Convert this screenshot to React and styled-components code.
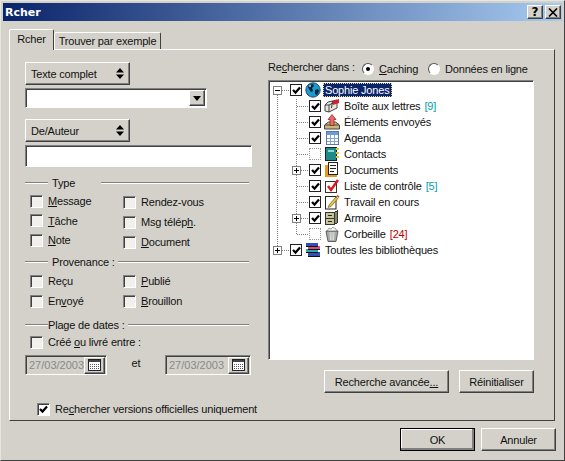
import styled, { createGlobalStyle, css } from "styled-components";

const FACE = "#d3d1ca";

const GlobalStyle = createGlobalStyle`
  html, body {
    margin: 0;
    padding: 0;
    background: ${FACE};
  }
  * {
    box-sizing: border-box;
  }
`;

const raised = css`
  background: ${FACE};
  border: 1px solid;
  border-color: #fff #404040 #404040 #fff;
  box-shadow: inset -1px -1px 0 #808080;
`;

const sunken = css`
  background: #fff;
  border: 1px solid;
  border-color: #808080 #fff #fff #808080;
  box-shadow: inset 1px 1px 0 #404040;
`;

/* ---------- icons ---------- */

const Icon = ({ children }) => (
  <svg width="16" height="16" viewBox="0 0 16 16" shapeRendering="crispEdges">
    {children}
  </svg>
);

const GlobeIcon = () => (
  <svg width="16" height="16" viewBox="0 0 16 16">
    <circle cx="8" cy="8" r="7.2" fill="#1c9ad0" stroke="#0a2a50" strokeWidth="0.8" />
    <path d="M4 3l4-1 1 2-2 2 1 3-2 1-2-3-1-2z" fill="#06233a" />
    <path d="M10 8l3-1 1 2-2 4-2-1z" fill="#06233a" />
    <circle cx="5" cy="4" r="1" fill="#8fe0f0" />
  </svg>
);

const MailIcon = () => (
  <svg width="16" height="16" viewBox="0 0 16 16">
    <path d="M1 7l3-3 9-2v8l-8 4-4-1z" fill="#e8e6e0" stroke="#333" strokeWidth="0.9" />
    <path d="M5 14V7L1 7M5 7l8-4" fill="none" stroke="#333" strokeWidth="0.9" />
    <path d="M7 10l1-7 1 0-1 7z" fill="#333" />
    <path d="M9 3l6-2v4l-6 2z" fill="#d8202c" />
  </svg>
);

const OutboxIcon = () => (
  <svg width="16" height="16" viewBox="0 0 16 16">
    <path d="M0.5 11l4-3h7l4 3v4h-15z" fill="#c8b878" stroke="#444" />
    <path d="M1 11h14" stroke="#444" />
    <path d="M8 0.5l4 5h-2v6H6v-6H4z" fill="#ea6a6a" stroke="#8a1c1c" strokeWidth="0.7" />
  </svg>
);

const AgendaIcon = () => (
  <Icon>
    <path d="M2 1.5h12.5v13H2z" fill="#fff" stroke="#5a78a8" />
    <path d="M3 2h11v3H3z" fill="#6c9cd8" />
    <path d="M3 8h11M3 11h11M6 5v9M10 5v9" stroke="#8aa4c8" />
  </Icon>
);

const ContactsIcon = () => (
  <Icon>
    <path d="M1.5 1.5h11v13h-11z" fill="#1f8a88" stroke="#123" />
    <path d="M4 4h6v2H4z" fill="#8fd8d0" />
    <path d="M12 2h3v2h-3zM12 6h3v2h-3zM12 10h3v2h-3z" fill="#e8c830" />
  </Icon>
);

const DocumentsIcon = () => (
  <Icon>
    <path d="M1 3h3v10h9v2H1z" fill="#e89820" />
    <path d="M4.5 0.5h9v12h-9z" fill="#fff" stroke="#222" />
    <path d="M6 3h6M6 6h6M6 9h4" stroke="#222" />
  </Icon>
);

const ChecklistIcon = () => (
  <svg width="16" height="16" viewBox="0 0 16 16">
    <rect x="1.5" y="3.5" width="11" height="11" fill="#fff" stroke="#333" />
    <path d="M4 8l3 4 7-10" fill="none" stroke="#d81818" strokeWidth="2.4" />
  </svg>
);

const WorkIcon = () => (
  <svg width="16" height="16" viewBox="0 0 16 16">
    <rect x="1.5" y="2.5" width="10.5" height="12.5" fill="#fff" stroke="#222" />
    <path d="M5 11l7-8 2 1.5-7 8-3 1z" fill="#e8c030" stroke="#553" strokeWidth="0.6" />
    <path d="M12.5 2l1-1 2 1.5-1 1.2z" fill="#d03030" />
  </svg>
);

const CabinetIcon = () => (
  <Icon>
    <path d="M1.5 2.5h9v12h-9z" fill="#c8c49a" stroke="#333" />
    <path d="M10.5 2.5l3-2v12l-3 2z" fill="#8e8a60" stroke="#333" />
    <path d="M1.5 8.5h9" stroke="#333" />
    <path d="M4 5h4v1H4zM4 11h4v1H4z" fill="#222" />
  </Icon>
);

const TrashIcon = () => (
  <svg width="16" height="16" viewBox="0 0 16 16">
    <path d="M2 5h12l-2 10.5H4z" fill="#a8aca8" stroke="#444" strokeWidth="0.8" />
    <path d="M6 6l.6 8M8 6v8M10 6l-.6 8" stroke="#eee" strokeWidth="0.8" />
    <path d="M3 5l2-3 2 1 2-2 3 2 1 2z" fill="#f0f0ec" stroke="#666" strokeWidth="0.6" />
  </svg>
);

const LibraryIcon = () => (
  <Icon>
    <path d="M1 1h12v3H1z" fill="#3050b8" />
    <path d="M3 4h12v3H3z" fill="#e04888" />
    <path d="M1 7h12v3H1z" fill="#28b0a8" />
    <path d="M3 10h12v4H3z" fill="#3050b8" />
    <path d="M1 4h12M3 7h12M1 10h12M3 14h12" stroke="#111" />
  </Icon>
);

const CalendarIcon = () => (
  <Icon>
    <path d="M1.5 2.5h12v11h-12z" fill="#fff" stroke="#222" />
    <path d="M2 3h11v2H2z" fill="#444" />
    <path d="M3 7h9M3 9h9M3 11h9" stroke="#556" strokeDasharray="1 1" />
  </Icon>
);

const Tick = () => (
  <svg width="9" height="9" viewBox="0 0 9 9">
    <path d="M1 4l2.5 2.6L8 1.5" fill="none" stroke="#000" strokeWidth="2.2" />
  </svg>
);

const CloseGlyph = () => (
  <svg width="10" height="9" viewBox="0 0 10 9">
    <path d="M1 0.5l8 8M9 0.5l-8 8" fill="none" stroke="#000" strokeWidth="1.6" />
  </svg>
);

const UpDownArrows = () => (
  <svg width="8" height="11" viewBox="0 0 8 11">
    <path d="M4 0L8 4.5H0zM0 6.5h8L4 11z" fill="#000" />
  </svg>
);

const DownArrow = () => (
  <svg width="8" height="5" viewBox="0 0 8 5">
    <path d="M0 0h8L4 5z" fill="#000" />
  </svg>
);

/* ---------- window chrome ---------- */

const Window = styled.div`
  width: 565px;
  height: 461px;
  padding: 2px;
  background: ${FACE};
  font-family: "Liberation Sans", Arial, sans-serif;
  font-size: 11px;
  letter-spacing: -0.18px;
  color: #111;
  white-space: nowrap;
  border: 1px solid;
  border-color: #e8e6e0 #404040 #404040 #e8e6e0;
  overflow: hidden;
`;

const TitleBar = styled.div`
  height: 18px;
  display: flex;
  align-items: center;
  padding: 0 1px 0 2px;
  background: linear-gradient(90deg, #0a246a, #a6caf0);
  color: #fff;
  font-family: "DejaVu Sans", sans-serif;
  font-size: 11px;
  font-weight: 700;
  letter-spacing: 0;
`;

const TitleText = styled.span`
  flex: 1;
`;

const TitleButton = styled.span`
  ${raised}
  width: 16px;
  height: 14px;
  margin-left: 2px;
  display: flex;
  align-items: center;
  justify-content: center;
  font-size: 12px;
  font-weight: 700;
  color: #000;
`;

const Body = styled.div`
  padding: 8px 7px 0 6px;
`;

const TabRow = styled.div`
  display: flex;
  align-items: flex-end;
  height: 20px;
`;

const Tab = styled.div`
  border: 1px solid;
  border-color: #fff #404040 transparent #fff;
  border-radius: 2px 2px 0 0;
  background: ${FACE};
  display: flex;
  align-items: center;
  justify-content: center;
  width: ${(p) => (p.$active ? "45px" : "107px")};
  height: ${(p) => (p.$active ? "21px" : "17px")};
  border-bottom-width: 0;
  ${(p) =>
    p.$active &&
    css`
      position: relative;
      z-index: 1;
      margin-bottom: -1px;
      padding-bottom: 3px;
    `}
`;

const Panel = styled.div`
  height: 372px;
  padding: 8px 0 0 15px;
  display: grid;
  grid-template-columns: 227px 266px;
  column-gap: 16px;
  align-items: start;
  border: 1px solid;
  border-color: #fff #404040 #404040 #fff;
`;

const Footer = styled.div`
  display: flex;
  justify-content: flex-end;
  gap: 6px;
  margin: 7px -1px 0 0;
`;

const PushButton = styled.div`
  ${raised}
  width: ${(p) => p.$width}px;
  height: 23px;
  display: flex;
  align-items: center;
  justify-content: center;
  ${(p) =>
    p.$default &&
    css`
      outline: 1px solid #000;
      outline-offset: -1px;
      box-shadow: inset -2px -2px 0 #808080, inset 1px 1px 0 #fff;
    `}
`;

const Mnemonic = styled.span`
  text-decoration: underline;
`;

/* ---------- left column ---------- */

const LeftColumn = styled.div`
  display: flex;
  flex-direction: column;
  padding-top: 4px;
`;

const DropButton = styled.div`
  ${raised}
  width: 105px;
  height: 23px;
  margin-top: ${(p) => p.$top || 0}px;
  padding: 0 5px 0 5px;
  display: flex;
  align-items: center;
  justify-content: space-between;
`;

const Combo = styled.div`
  ${sunken}
  width: 182px;
  height: 20px;
  margin-top: 3px;
  padding: 1px 1px 1px 0;
  display: flex;
  justify-content: flex-end;
`;

const ComboArrow = styled.div`
  ${raised}
  width: 16px;
  display: flex;
  align-items: center;
  justify-content: center;
`;

const TextInput = styled.div`
  ${sunken}
  height: 22px;
  margin-top: 3px;
`;

const SectionHeading = styled.div`
  height: 14px;
  margin-top: ${(p) => p.$top}px;
  width: 224px;
  display: flex;
  align-items: center;
`;

const Rule = styled.span`
  height: 2px;
  border-top: 1px solid #808080;
  border-bottom: 1px solid #fff;
  flex: ${(p) => (p.$grow ? 1 : "none")};
  width: ${(p) => (p.$grow ? "auto" : `${p.$width}px`)};
`;

const SectionLabel = styled.span`
  padding: ${(p) => p.$pad};
  width: ${(p) => (p.$width ? `${p.$width}px` : "auto")};
`;

const CheckGrid = styled.div`
  display: grid;
  grid-template-columns: 93px auto;
  padding-left: 5px;
  margin-top: ${(p) => p.$top}px;
`;

const CheckColumn = styled.div`
  display: flex;
  flex-direction: column;
  padding-top: ${(p) => p.$top || 0}px;
`;

const CheckRow = styled.div`
  height: ${(p) => p.$height || 20}px;
  display: flex;
  align-items: center;
  gap: 5px;
  margin-left: ${(p) => p.$left || 0}px;
  margin-top: ${(p) => p.$top || 0}px;
`;

const CheckBox = styled.span`
  ${sunken}
  background: ${(p) => (p.$on ? "#fff" : "#f1f0ec")};
  width: 13px;
  height: 13px;
  flex: none;
  display: flex;
  align-items: center;
  justify-content: center;
`;

const DateRow = styled.div`
  display: grid;
  grid-template-columns: 82px 58px 86px;
  align-items: center;
  margin-top: 3px;
`;

const DateField = styled.div`
  ${sunken}
  background: ${FACE};
  height: 20px;
  padding: 1px 1px 1px 3px;
  color: #8a8a86;
  display: flex;
  align-items: center;
`;

const DateText = styled.span`
  flex: 1;
  letter-spacing: 0;
`;

const CalendarButton = styled.span`
  ${raised}
  flex: none;
  width: 21px;
  height: 17px;
  display: flex;
  align-items: center;
  justify-content: center;
`;

const DateJoin = styled.span`
  text-align: center;
  margin-top: -4px;
`;

/* ---------- right column ---------- */

const RightColumn = styled.div`
  display: flex;
  flex-direction: column;
`;

const SourceRow = styled.div`
  height: 18px;
  display: flex;
  align-items: center;
`;

const SourceLabel = styled.span`
  width: 94px;
`;

const RadioOption = styled.span`
  display: flex;
  align-items: center;
  gap: 5px;
  width: ${(p) => p.$width}px;
  padding-top: 3px;
`;

const Radio = styled.span`
  width: 12px;
  height: 12px;
  flex: none;
  border-radius: 50%;
  border: 1px solid;
  border-color: #555 #fff #fff #555;
  background: #fff;
  display: flex;
  align-items: center;
  justify-content: center;
  &::after {
    content: "";
    width: 4px;
    height: 4px;
    border-radius: 50%;
    background: ${(p) => (p.$on ? "#000" : "transparent")};
  }
`;

const TreeBox = styled.div`
  ${sunken}
  height: 280px;
  margin-top: 4px;
  padding: 1px 0 0 2px;
`;

const TreeRow = styled.div`
  height: 16px;
  display: flex;
  align-items: center;
`;

const dots = "repeating-linear-gradient(0deg, #808080 0 1px, transparent 1px 2px)";
const dotsH = "repeating-linear-gradient(90deg, #808080 0 1px, transparent 1px 2px)";

const Gutter = styled.span`
  position: relative;
  flex: none;
  width: 19px;
  height: 16px;
  &::before {
    content: "";
    position: absolute;
    left: 6px;
    width: 1px;
    top: ${(p) => (p.$line === "down" ? "8px" : "0")};
    bottom: ${(p) => (p.$line === "up" ? "8px" : "0")};
    display: ${(p) => (p.$line ? "block" : "none")};
    background: ${dots};
  }
  &::after {
    content: "";
    position: absolute;
    left: 7px;
    right: 0;
    top: 8px;
    height: 1px;
    display: ${(p) => (p.$branch ? "block" : "none")};
    background: ${dotsH};
  }
`;

const Expander = styled.span`
  position: absolute;
  z-index: 1;
  left: 2px;
  top: 4px;
  width: 9px;
  height: 9px;
  border: 1px solid #808080;
  background: #fff;
  &::before {
    content: "";
    position: absolute;
    left: 1px;
    right: 1px;
    top: 3px;
    height: 1px;
    background: #000;
  }
  &::after {
    content: "";
    position: absolute;
    left: 3px;
    top: 1px;
    bottom: 1px;
    width: 1px;
    background: #000;
    display: ${(p) => (p.$open ? "none" : "block")};
  }
`;

const TreeCheck = styled.span`
  flex: none;
  width: 12px;
  height: 12px;
  margin-right: 3px;
  background: #fff;
  border: 1px ${(p) => (p.$on ? "solid #222" : "dotted #999")};
  display: flex;
  align-items: center;
  justify-content: center;
`;

const TreeIcon = styled.span`
  flex: none;
  width: 16px;
  height: 16px;
  display: flex;
`;

const TreeLabel = styled.span`
  margin-left: 2px;
  padding: 0 1px;
  height: 14px;
  line-height: 12px;
  border: 1px ${(p) => (p.$selected ? "dotted #e8d890" : "solid transparent")};
  background: ${(p) => (p.$selected ? "#0a246a" : "transparent")};
  color: ${(p) => (p.$selected ? "#fff" : "inherit")};
`;

const Count = styled.span`
  margin-left: 4px;
  color: ${(p) => p.$color};
`;

const ActionRow = styled.div`
  display: flex;
  justify-content: flex-end;
  gap: 10px;
  margin-top: 10px;
`;

/* ---------- data ---------- */

const folders = [
  { name: "Boîte aux lettres", icon: <MailIcon />, on: true, count: "[9]", color: "#00a0a8" },
  { name: "Éléments envoyés", icon: <OutboxIcon />, on: true },
  { name: "Agenda", icon: <AgendaIcon />, on: true },
  { name: "Contacts", icon: <ContactsIcon />, on: false },
  { name: "Documents", icon: <DocumentsIcon />, on: true, more: true },
  { name: "Liste de contrôle", icon: <ChecklistIcon />, on: true, count: "[5]", color: "#00a0a8" },
  { name: "Travail en cours", icon: <WorkIcon />, on: true },
  { name: "Armoire", icon: <CabinetIcon />, on: true, more: true },
  { name: "Corbeille", icon: <TrashIcon />, on: false, count: "[24]", color: "#c00000", last: true },
];

const Check = ({ on, children, ...rest }) => (
  <CheckRow {...rest}>
    <CheckBox $on={on}>{on && <Tick />}</CheckBox>
    <span>{children}</span>
  </CheckRow>
);

const App = () => (
  <>
    <GlobalStyle />
    <Window>
      <TitleBar>
        <TitleText>Rcher</TitleText>
        <TitleButton>?</TitleButton>
        <TitleButton>
          <CloseGlyph />
        </TitleButton>
      </TitleBar>
      <Body>
        <TabRow>
          <Tab $active>Rcher</Tab>
          <Tab>Trouver par exemple</Tab>
        </TabRow>
        <Panel>
          <LeftColumn>
            <DropButton>
              Texte complet <UpDownArrows />
            </DropButton>
            <Combo>
              <ComboArrow>
                <DownArrow />
              </ComboArrow>
            </Combo>
            <DropButton $top={11}>
              De/Auteur <UpDownArrows />
            </DropButton>
            <TextInput />

            <SectionHeading $top={9}>
              <Rule $width={23} />
              <SectionLabel $pad="0 0 0 4px" $width={53}>
                Type
              </SectionLabel>
              <Rule $grow />
            </SectionHeading>
            <CheckGrid $top={1}>
              <CheckColumn>
                <Check>
                  <Mnemonic>M</Mnemonic>essage
                </Check>
                <Check $height={19}>
                  <Mnemonic>T</Mnemonic>âche
                </Check>
                <Check>
                  <Mnemonic>N</Mnemonic>ote
                </Check>
              </CheckColumn>
              <CheckColumn $top={1}>
                <Check>Rendez-vous</Check>
                <Check>
                  Msg télép<Mnemonic>h</Mnemonic>.
                </Check>
                <Check>
                  <Mnemonic>D</Mnemonic>ocument
                </Check>
              </CheckColumn>
            </CheckGrid>

            <SectionHeading $top={3}>
              <Rule $width={23} />
              <SectionLabel $pad="0 3px 0 4px">Provenance :</SectionLabel>
              <Rule $grow />
            </SectionHeading>
            <CheckGrid $top={2}>
              <CheckColumn>
                <Check>Reçu</Check>
                <Check>
                  En<Mnemonic>v</Mnemonic>oyé
                </Check>
              </CheckColumn>
              <CheckColumn>
                <Check>
                  <Mnemonic>P</Mnemonic>ublié
                </Check>
                <Check>
                  <Mnemonic>B</Mnemonic>rouillon
                </Check>
              </CheckColumn>
            </CheckGrid>

            <SectionHeading $top={7}>
              <Rule $width={23} />
              <SectionLabel $pad="0 3px 0 0">Plage de dates :</SectionLabel>
              <Rule $grow />
            </SectionHeading>
            <Check $left={5}>
              Créé <Mnemonic>o</Mnemonic>u livré entre :
            </Check>
            <DateRow>
              <DateField>
                <DateText>27/03/2003</DateText>
                <CalendarButton>
                  <CalendarIcon />
                </CalendarButton>
              </DateField>
              <DateJoin>et</DateJoin>
              <DateField>
                <DateText>27/03/2003</DateText>
                <CalendarButton>
                  <CalendarIcon />
                </CalendarButton>
              </DateField>
            </DateRow>
            <Check $left={12} $top={24} on>
              Re<Mnemonic>c</Mnemonic>hercher versions officielles uniquement
            </Check>
          </LeftColumn>

          <RightColumn>
            <SourceRow>
              <SourceLabel>
                Re<Mnemonic>c</Mnemonic>hercher dans :
              </SourceLabel>
              <RadioOption $width={66}>
                <Radio $on />
                <span>
                  <Mnemonic>C</Mnemonic>aching
                </span>
              </RadioOption>
              <RadioOption>
                <Radio />
                <span>Données en ligne</span>
              </RadioOption>
            </SourceRow>
            <TreeBox>
              <TreeRow>
                <Gutter $line="down" $branch>
                  <Expander $open />
                </Gutter>
                <TreeCheck $on>
                  <Tick />
                </TreeCheck>
                <TreeIcon>
                  <GlobeIcon />
                </TreeIcon>
                <TreeLabel $selected>Sophie Jones</TreeLabel>
              </TreeRow>
              {folders.map((f) => (
                <TreeRow key={f.name}>
                  <Gutter $line="full" />
                  <Gutter $line={f.last ? "up" : "full"} $branch>
                    {f.more && <Expander />}
                  </Gutter>
                  <TreeCheck $on={f.on}>{f.on && <Tick />}</TreeCheck>
                  <TreeIcon>{f.icon}</TreeIcon>
                  <TreeLabel>
                    {f.name}
                    {f.count && <Count $color={f.color}>{f.count}</Count>}
                  </TreeLabel>
                </TreeRow>
              ))}
              <TreeRow>
                <Gutter $line="up" $branch>
                  <Expander />
                </Gutter>
                <TreeCheck $on>
                  <Tick />
                </TreeCheck>
                <TreeIcon>
                  <LibraryIcon />
                </TreeIcon>
                <TreeLabel>Toutes les bibliothèques</TreeLabel>
              </TreeRow>
            </TreeBox>
            <ActionRow>
              <PushButton $width={125}>
                <span>
                  Recherche avancée<Mnemonic>...</Mnemonic>
                </span>
              </PushButton>
              <PushButton $width={75}>Réinitialiser</PushButton>
            </ActionRow>
          </RightColumn>
        </Panel>
        <Footer>
          <PushButton $width={75} $default>
            OK
          </PushButton>
          <PushButton $width={75}>Annuler</PushButton>
        </Footer>
      </Body>
    </Window>
  </>
);

export default App;
